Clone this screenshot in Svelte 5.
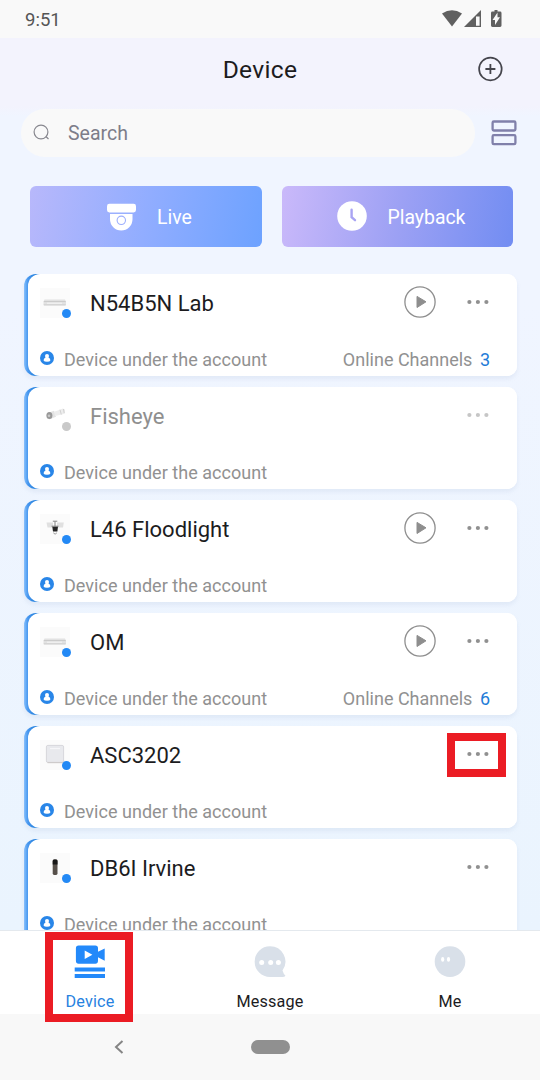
<script lang="ts">
	interface Device {
		name: string;
		kind: string;
		online: boolean;
		playable?: boolean;
		channels?: number;
		marked?: boolean;
	}

	const devices: Device[] = [
		{ name: 'N54B5N Lab', kind: 'recorder', online: true, playable: true, channels: 3 },
		{ name: 'Fisheye', kind: 'bullet', online: false },
		{ name: 'L46 Floodlight', kind: 'floodlight', online: true, playable: true },
		{ name: 'OM', kind: 'recorder', online: true, playable: true, channels: 6 },
		{ name: 'ASC3202', kind: 'hub', online: true, marked: true },
		{ name: 'DB6I Irvine', kind: 'doorbell', online: true }
	];

	let query = $state('');
	let activeTab = $state('Device');
</script>

<div class="phone">
	<div class="status">
		<span class="time">9:51</span>
		<svg width="62" height="20" viewBox="0 0 62 20" fill="#606060">
			<path d="M0 4.6Q10 -2.2 20 4.6L10 17.5Z" />
			<path fill-rule="evenodd" d="M39 1V18H22ZM37.6 7.5H34V16.7H37.6Z" />
			<path d="M52.5 1h3V2.5h2.6q1.4 0 1.4 1.4V16.6q0 1.4-1.4 1.4H50.4q-1.4 0-1.4-1.4V3.9q0-1.4 1.4-1.4h2.1Z" />
			<path fill="#f9f9f9" d="M55.5 3.5V8.2H58L53 16V11H50.5Z" />
		</svg>
	</div>

	<header>
		<h1>Device</h1>
		<button class="add" aria-label="Add device">
			<svg width="26" height="26" viewBox="0 0 26 26" fill="none" stroke="#44444c">
				<circle cx="13.4" cy="13" r="11.3" stroke-width="1.7" />
				<path d="M13.4 8v10M8.4 13h10" stroke-width="1.8" />
			</svg>
		</button>
	</header>

	<div class="search-row">
		<label class="search">
			<svg width="18" height="18" viewBox="0 0 18 18" fill="none" stroke="#88888f" stroke-width="1.2">
				<circle cx="8" cy="8" r="6.9" />
				<path d="M12.9 12.5l2.6 2.5" />
			</svg>
			<input type="text" placeholder="Search" bind:value={query} />
		</label>
		<svg width="26" height="26" viewBox="0 0 26 26" fill="none" stroke="#8080aa" stroke-width="2.3">
			<rect x="1.6" y="1.5" width="22.8" height="9" rx="1.2" />
			<rect x="1.6" y="15.2" width="22.8" height="9" rx="1.2" />
		</svg>
	</div>

	<div class="actions">
		<button class="action live">
			<svg width="30" height="30" viewBox="0 0 30 30">
				<rect x="1" y="1.8" width="29" height="8.6" rx="2.4" fill="#fff" />
				<path d="M4 12H26.5V17.2a11.25 11.25 0 0 1-22.5 0Z" fill="#fff" />
				<circle cx="15.3" cy="18.3" r="4.2" fill="none" stroke="#9caefd" stroke-width="1.1" />
			</svg>
			<span>Live</span>
		</button>
		<button class="action playback">
			<svg width="30" height="30" viewBox="0 0 30 30">
				<circle cx="15" cy="15" r="14.8" fill="#fff" />
				<path d="M14.6 8.7V16.2L18 19.2" fill="none" stroke="#a9a4f3" stroke-width="2.4" stroke-linecap="round" />
			</svg>
			<span>Playback</span>
		</button>
	</div>

	<main>
		{#each devices as device}
			<div class="card" class:offline={!device.online}>
				<div class="body">
					<div class="top">
						<div class="thumb">
							<svg width="30" height="30" viewBox="0 0 30 30">
								{#if device.kind !== 'bullet'}
									<rect width="30" height="30" fill="#fbfbfb" />
								{/if}
								{#if device.kind === 'recorder'}
									<path d="M4.5 11.5H25l1 2.2V17H3.5V13.7Z" fill="#e2e2e2" />
									<path d="M3.8 13.6H25.7M3.8 17H25.7" stroke="#c2c2c2" stroke-width=".8" />
									<path d="M7 15.2H22" stroke="#f5f5f5" />
								{:else if device.kind === 'bullet'}
									<path d="M8 12L14 9.7 16 15.7 9 18.5Z" fill="#e3e3e3" />
									<path d="M14 10.7L20 8.7 22.8 7.5 25 8.5V12.6L22 13.6 15 15Z" fill="#ededed" />
									<path d="M20 8.7l1.3 4.8M23.4 8l.8 4" stroke="#d2d2d2" fill="none" />
									<ellipse cx="9.4" cy="14.6" rx="3" ry="3.5" fill="#999" />
									<circle cx="9" cy="14.8" r="1.3" fill="#c8c8c8" />
								{:else if device.kind === 'floodlight'}
									<path d="M6.5 8.5H13V13.4H7.5ZM17 8.5H23.8L23 13.4H17Z" fill="#e0e0e0" />
									<path d="M12.8 7.2H17.3M15 7.2V12.5M11.5 12.2H18.5" stroke="#858585" fill="none" />
									<path d="M12.3 12.7H18L17.4 17.6H13Z" fill="#252525" />
									<path d="M13.3 18.8q1.8 2.8 3.6 0" stroke="#999" fill="none" />
								{:else if device.kind === 'hub'}
									<rect x="6.4" y="5.4" width="17.2" height="17" rx="1.5" fill="#e8e9ed" stroke="#cfcfd4" stroke-width=".8" />
									<path d="M10 8.6H20" stroke="#f8f8fa" />
									<path d="M7.5 22.7H23" stroke="#c7c2bb" stroke-width=".7" />
								{:else}
									<rect x="12.7" y="6.5" width="4.8" height="15.5" rx="1.4" fill="#57504a" />
									<path d="M12.7 11.5V8q0-1.5 1.5-1.5h1.8q1.5 0 1.5 1.5v3.5Z" fill="#171717" />
								{/if}
							</svg>
							<i class="dot"></i>
						</div>
						<h2>{device.name}</h2>
						{#if device.playable}
							<button class="play" aria-label="Play">
								<svg width="32" height="32" viewBox="0 0 32 32">
									<circle cx="16" cy="16" r="15.1" fill="none" stroke="#8e8e8e" stroke-width="1.3" />
									<path d="M13 10.4L22 15.8 13 21.5Z" fill="#8e8e8e" stroke="#8e8e8e" stroke-linejoin="round" />
								</svg>
							</button>
						{/if}
						<button class="more" class:marked={device.marked} aria-label="More">
							<svg width="22" height="6" viewBox="0 0 22 6">
								<circle cx="2.4" cy="3" r="2.1" />
								<circle cx="10.9" cy="3" r="2.1" />
								<circle cx="19.4" cy="3" r="2.1" />
							</svg>
						</button>
					</div>
					<div class="bottom">
						<svg width="14" height="14" viewBox="0 0 14 14">
							<circle cx="7" cy="7" r="7" fill="#2986e8" />
							<circle cx="7" cy="4.9" r="2" fill="#fff" />
							<path d="M6 6H8Q10.8 7.7 10.4 9.5Q9.8 10.7 7 10.7Q4.2 10.7 3.6 9.5Q3.2 7.7 6 6Z" fill="#fff" />
						</svg>
						<span class="account">Device under the account</span>
						{#if device.channels}
							<span class="channels">Online Channels <b>{device.channels}</b></span>
						{/if}
					</div>
				</div>
			</div>
		{/each}
	</main>

	<nav>
		<button class="tab" class:active={activeTab === 'Device'} onclick={() => (activeTab = 'Device')}>
			<svg width="32" height="34" viewBox="0 0 32 34" fill="#2389fa">
				<path fill-rule="evenodd" d="M4.6.5H21.3Q24 .5 24 3.2V6.8L30.7 3.4V15.7L24 12.3V15.8Q24 18.7 21.3 18.7H4.6Q1.9 18.7 1.9 15.8V3.2Q1.9.5 4.6.5ZM10.7 5.4V14L18.4 9.7Z" />
				<path d="M.7 22.4H31V26.5H.7ZM.7 29H31V33H.7Z" />
			</svg>
			<span>Device</span>
		</button>
		<button class="tab" class:active={activeTab === 'Message'} onclick={() => (activeTab = 'Message')}>
			<svg width="32" height="34" viewBox="0 0 32 34">
				<path d="M16 1.3a15.3 15.3 0 0 1 12.5 24.2Q29.5 29 31.4 30.6Q31.4 32 29 32H16A15.35 15.35 0 0 1 16 1.3Z" fill="#d9e0e9" />
				<circle cx="7.7" cy="17.4" r="2.5" fill="#fff" />
				<circle cx="16.7" cy="17.4" r="2.5" fill="#fff" />
				<circle cx="24.4" cy="17.4" r="2.5" fill="#fff" />
			</svg>
			<span>Message</span>
		</button>
		<button class="tab" class:active={activeTab === 'Me'} onclick={() => (activeTab = 'Me')}>
			<svg width="32" height="34" viewBox="0 0 32 34">
				<circle cx="16" cy="16.6" r="15.3" fill="#d9e0e9" />
				<ellipse cx="8.7" cy="14.4" rx="1.6" ry="2.4" fill="#fff" />
				<ellipse cx="14.5" cy="14.4" rx="1.6" ry="2.4" fill="#fff" />
			</svg>
			<span>Me</span>
		</button>
		<div class="highlight"></div>
	</nav>

	<div class="system">
		<svg width="10" height="14" viewBox="0 0 10 14" fill="none" stroke="#858585" stroke-width="2">
			<path d="M8.5 1L2 7l6.5 6" />
		</svg>
		<div class="home"></div>
	</div>
</div>

<style>
	:global(body) {
		margin: 0;
	}
	.phone {
		width: 540px;
		height: 1080px;
		display: flex;
		flex-direction: column;
		overflow: hidden;
		font-family: Roboto, sans-serif;
		background: linear-gradient(#f3f3fd 0, #f3f3fd 106px, #f0f5ff 116px, #f0f5ff 300px, #eaf4fe 930px);
	}
	button {
		padding: 0;
		border: 0;
		background: none;
		font: inherit;
		cursor: pointer;
	}
	svg {
		display: block;
		flex: none;
	}
	.status {
		box-sizing: border-box;
		height: 38px;
		flex: none;
		display: flex;
		align-items: center;
		justify-content: space-between;
		padding: 0 36px 0 25px;
		background: #f9f9f9;
	}
	.time {
		padding-top: 2px;
		font-size: 18.5px;
		color: #555;
	}
	header {
		height: 71px;
		flex: none;
		display: grid;
		grid-template-columns: 44px 1fr 64px;
		align-items: center;
		box-sizing: border-box;
		padding-bottom: 8px;
	}
	h1 {
		grid-column: 2;
		margin: 0;
		text-align: center;
		font-size: 24.6px;
		font-weight: 400;
		letter-spacing: 0.3px;
		line-height: 28px;
		color: #1c1c1e;
	}
	.add {
		justify-self: start;
		margin: 0 0 2px 1px;
	}
	.search-row {
		height: 48px;
		flex: none;
		display: flex;
		align-items: center;
		gap: 16px;
		padding-left: 21px;
	}
	.search {
		box-sizing: border-box;
		width: 454px;
		height: 48px;
		display: flex;
		align-items: center;
		gap: 17px;
		padding-left: 12px;
		border-radius: 24px;
		background: #f9f9f9;
	}
	input {
		width: 360px;
		padding: 1px 0 0;
		border: 0;
		outline: 0;
		background: none;
		font: 19.5px Roboto, sans-serif;
		color: #333;
	}
	input::placeholder {
		color: #7d7d89;
	}
	.actions {
		flex: none;
		display: grid;
		grid-template-columns: 1fr 1fr;
		gap: 20px;
		padding: 29px 27px 26px 30px;
	}
	.action {
		height: 61px;
		display: flex;
		align-items: center;
		border-radius: 6px;
		font-size: 19.4px;
		color: #fff;
	}
	.action span {
		line-height: 24px;
		padding-top: 2px;
	}
	.live {
		gap: 21px;
		padding-left: 76px;
		background: linear-gradient(100deg, #b8b8fb, #91adff 50%, #6da2ff);
	}
	.playback {
		gap: 21px;
		padding-left: 55px;
		background: linear-gradient(100deg, #cab9fa, #9da1f4 50%, #728df2);
	}
	.live svg {
		margin-top: 1px;
	}
	.playback svg {
		margin-bottom: 1px;
	}
	main {
		flex: 1;
		min-height: 0;
		overflow: hidden;
		display: flex;
		flex-direction: column;
		gap: 11px;
		padding: 1px 23px 0 24px;
	}
	.card {
		flex: none;
		height: 102px;
		padding-left: 4px;
		box-sizing: border-box;
		border-radius: 12px 10px 10px 12px;
		background: linear-gradient(90deg, #8cc0fa 0, #64abf6 2px, #4796ee 4px, #2b85e0 10px, #2b85e0 20px, #fff 20px);
		box-shadow: 0 3px 4px rgba(140, 165, 200, 0.14);
	}
	.body {
		height: 102px;
		display: flex;
		flex-direction: column;
		border-radius: 12px 10px 10px 12px;
		background: #fff;
	}
	.top {
		height: 58px;
		display: flex;
		align-items: center;
		padding: 0 28px 0 12px;
	}
	.thumb {
		position: relative;
	}
	.dot {
		position: absolute;
		right: -1px;
		bottom: 0;
		width: 9px;
		height: 9px;
		border-radius: 50%;
		background: #2389f5;
	}
	.offline .dot {
		background: #c9c9c9;
	}
	h2 {
		flex: 1;
		margin: 0 0 0 20px;
		padding-top: 2px;
		font-size: 22px;
		font-weight: 400;
		line-height: 28px;
		color: #1c1c1e;
	}
	.offline h2 {
		color: #8f8f8f;
	}
	.play {
		margin: 0 31px 2px 0;
	}
	.more {
		margin-bottom: 2px;
		fill: #909090;
	}
	.offline .more {
		fill: #c6c6c6;
	}
	.marked {
		margin: 0 -17px;
		padding: 10px 9px 12px 12px;
		border: 8px solid #eb1c24;
	}
	.bottom {
		height: 44px;
		display: flex;
		align-items: center;
		box-sizing: border-box;
		padding: 8px 27px 0 12px;
		font-size: 18px;
		color: #919191;
	}
	.account {
		margin-left: 10px;
		letter-spacing: 0.03px;
	}
	.channels {
		margin-left: auto;
	}
	.bottom span {
		padding-top: 2px;
	}
	b {
		margin-left: 3px;
		font-weight: 400;
		color: #1f7cd8;
	}
	nav {
		position: relative;
		height: 83px;
		flex: none;
		display: grid;
		grid-template-columns: repeat(3, 1fr);
		border-top: 1px solid #e4e9ee;
		background: #fff;
	}
	.tab {
		display: flex;
		flex-direction: column;
		align-items: center;
		padding-top: 14px;
		font-size: 16.2px;
		letter-spacing: 0.15px;
		color: #1c1c1e;
	}
	.tab span {
		margin-top: 13px;
		line-height: 20px;
	}
	.tab.active {
		color: #2782df;
	}
	/* frame around the Device tab, reaching into the system bar */
	.highlight {
		position: absolute;
		left: 45px;
		top: 1px;
		z-index: 1;
		box-sizing: border-box;
		width: 88px;
		height: 90px;
		border: 8px solid #eb1c24;
		pointer-events: none;
	}
	.system {
		height: 66px;
		flex: none;
		display: flex;
		align-items: center;
		gap: 127px;
		padding-left: 114px;
		background: #f8f8f8;
	}
	.home {
		width: 39px;
		height: 14px;
		border-radius: 7px;
		background: #909090;
	}
</style>
